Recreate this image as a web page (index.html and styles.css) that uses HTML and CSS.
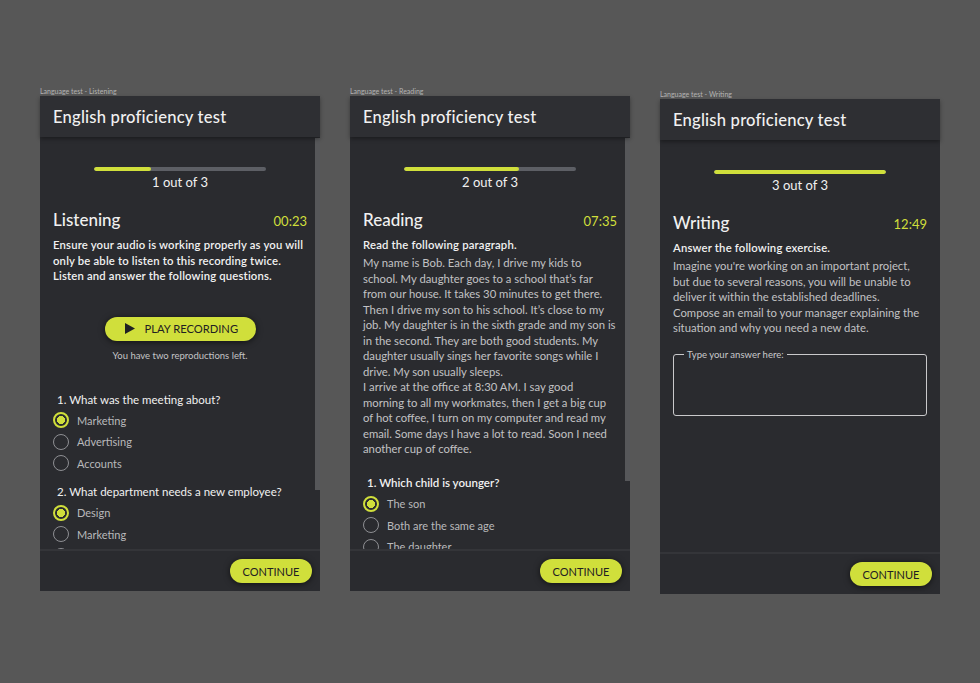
FILE: index.html
```html
<!DOCTYPE html>
<html>
<head>
	<title>Language test</title>
	<meta charset="utf-8">
	<meta name="viewport" content="width=device-width, initial-scale=1">
	<link rel="stylesheet" href="styles.css">
</head>
<body>
	<div class="board">

		<!-- Listening -->
		<div class="artboard">
			<div class="artboard-label">Language test - Listening</div>
			<div class="screen">
				<header class="screen-header"><h1>English proficiency test</h1></header>
				<div class="screen-body">
					<div class="screen-content">
						<div class="progress"><div class="progress-fill" style="width: 33.3%"></div></div>
						<p class="progress-label">1 out of 3</p>
						<div class="section-head">
							<h2>Listening</h2>
							<span class="timer">00:23</span>
						</div>
						<p class="instruction">Ensure your audio is working properly as you will only be able to listen to this recording twice. Listen and answer the following questions.</p>
						<div class="player">
							<button class="play-btn">
								<svg width="10" height="11" viewBox="0 0 10 11"><polygon points="0,0 10,5.5 0,11" fill="#1f2023"/></svg>
								PLAY RECORDING
							</button>
							<p class="player-note">You have two reproductions left.</p>
						</div>
						<div class="question">
							<p class="question-title">1. What was the meeting about?</p>
							<label class="option"><span class="radio checked"></span>Marketing</label>
							<label class="option"><span class="radio"></span>Advertising</label>
							<label class="option"><span class="radio"></span>Accounts</label>
						</div>
						<div class="question">
							<p class="question-title">2. What department needs a new employee?</p>
							<label class="option"><span class="radio checked"></span>Design</label>
							<label class="option"><span class="radio"></span>Marketing</label>
							<label class="option"><span class="radio"></span>Sales</label>
						</div>
					</div>
					<div class="scrollbar"><div class="thumb" style="height: 352px"></div></div>
				</div>
				<footer class="screen-footer"><button class="continue-btn">CONTINUE</button></footer>
			</div>
		</div>

		<!-- Reading -->
		<div class="artboard">
			<div class="artboard-label">Language test - Reading</div>
			<div class="screen">
				<header class="screen-header"><h1>English proficiency test</h1></header>
				<div class="screen-body">
					<div class="screen-content">
						<div class="progress"><div class="progress-fill" style="width: 66.6%"></div></div>
						<p class="progress-label">2 out of 3</p>
						<div class="section-head">
							<h2>Reading</h2>
							<span class="timer">07:35</span>
						</div>
						<p class="instruction">Read the following paragraph.</p>
						<p class="text">My name is Bob. Each day, I drive my kids to school. My daughter goes to a school that’s far from our house. It takes 30 minutes to get there. Then I drive my son to his school. It’s close to my job. My daughter is in the sixth grade and my son is in the second. They are both good students. My daughter usually sings her favorite songs while I drive. My son usually sleeps.<br>I arrive at the office at 8:30 AM. I say good morning to all my workmates, then I get a big cup of hot coffee, I turn on my computer and read my email. Some days I have a lot to read. Soon I need another cup of coffee.</p>
						<div class="question question-reading">
							<p class="question-title">1. Which child is younger?</p>
							<label class="option"><span class="radio checked"></span>The son</label>
							<label class="option"><span class="radio"></span>Both are the same age</label>
							<label class="option"><span class="radio"></span>The daughter</label>
						</div>
					</div>
					<div class="scrollbar"><div class="thumb" style="height: 343px"></div></div>
				</div>
				<footer class="screen-footer"><button class="continue-btn">CONTINUE</button></footer>
			</div>
		</div>

		<!-- Writing -->
		<div class="artboard artboard-low">
			<div class="artboard-label">Language test - Writing</div>
			<div class="screen">
				<header class="screen-header"><h1>English proficiency test</h1></header>
				<div class="screen-body">
					<div class="screen-content">
						<div class="progress"><div class="progress-fill" style="width: 100%"></div></div>
						<p class="progress-label">3 out of 3</p>
						<div class="section-head">
							<h2>Writing</h2>
							<span class="timer">12:49</span>
						</div>
						<p class="instruction">Answer the following exercise.</p>
						<p class="text">Imagine you're working on an important project, but due to several reasons, you will be unable to deliver it within the established deadlines. Compose an email to your manager explaining the situation and why you need a new date.</p>
						<fieldset class="answer">
							<legend>Type your answer here:</legend>
							<textarea></textarea>
						</fieldset>
					</div>
					<div class="scrollbar"></div>
				</div>
				<footer class="screen-footer"><button class="continue-btn">CONTINUE</button></footer>
			</div>
		</div>

	</div>
</body>
</html>
```

FILE: styles.css
```css
body {
	margin: 0;
	background-color: #575757;
	font-family: "Lato", "Liberation Sans", sans-serif;
	color: #f1f1f1;
}

.board {
	display: flex;
	align-items: flex-start;
	gap: 30px;
	padding: 86px 0 0 40px;
}

.artboard {
	width: 280px;
}

.artboard-low {
	margin-top: 3px;
}

.artboard-label {
	height: 10px;
	font-size: 7px;
	line-height: 10px;
	color: #b4b4b4;
}

.screen {
	display: flex;
	flex-direction: column;
	height: 495px;
	background-color: #2a2b2f;
}

.screen-header {
	position: relative;
	z-index: 1;
	display: flex;
	align-items: center;
	height: 41px;
	padding-left: 13px;
	background-color: #2e2f33;
	box-shadow: 0 2px 4px rgba(0,0,0,0.35);
}

.screen-header h1 {
	margin: 0;
	font-size: 16.6px;
	font-weight: 500;
	letter-spacing: 0.2px;
}

.screen-body {
	flex: 1;
	min-height: 0;
	display: flex;
	overflow: hidden;
}

.screen-content {
	flex: 1;
	padding: 30px 8px 0 13px;
}

.scrollbar {
	width: 5px;
	padding-top: 1px;
}

.thumb {
	background-color: #56575a;
}

p {
	margin: 0;
}

.progress {
	width: 172px;
	height: 4px;
	margin: 0 auto;
	border-radius: 2px;
	background-color: #5d5f65;
	overflow: hidden;
}

.progress-fill {
	height: 100%;
	border-radius: 2px;
	background-color: #d0df3b;
}

.progress-label {
	margin-top: 3px;
	text-align: center;
	font-size: 13px;
	line-height: 16px;
}

.section-head {
	display: flex;
	justify-content: space-between;
	align-items: baseline;
	margin-top: 19px;
	line-height: 22px;
}

.section-head h2 {
	margin: 0;
	font-size: 17px;
	font-weight: 500;
}

.timer {
	font-size: 13px;
	color: #d0df3b;
}

.instruction {
	margin-top: 5px;
	font-size: 11.3px;
	font-weight: 600;
	line-height: 15.5px;
	letter-spacing: 0.17px;
}

.text {
	margin-top: 2.5px;
	font-size: 11.3px;
	line-height: 15.5px;
	color: #c2c2c4;
}

.player {
	margin-top: 33px;
	text-align: center;
}

.play-btn {
	display: inline-flex;
	align-items: center;
	gap: 10px;
	width: 151px;
	height: 24px;
	padding: 0 0 0 20px;
	border: none;
	border-radius: 12px;
	background-color: #d0df3b;
	box-shadow: 0 1px 6px rgba(0,0,0,0.6);
	font-family: inherit;
	font-size: 11.2px;
	color: #1f2023;
}

.player-note {
	margin-top: 8.5px;
	font-size: 9.5px;
	line-height: 13px;
	color: #c4c4c6;
}

.question {
	margin-top: 10px;
}

.player + .question {
	margin-top: 29.5px;
}

.question-reading {
	margin-top: 18.5px;
}

.question-title {
	margin-bottom: 2px;
	padding-left: 4px;
	font-size: 11.5px;
	line-height: 16px;
}

.question-reading .question-title {
	font-weight: 600;
}

.option {
	display: flex;
	align-items: center;
	gap: 8px;
	height: 21.5px;
	font-size: 11px;
	color: #b9b9bb;
}

.radio {
	box-sizing: border-box;
	width: 16px;
	height: 16px;
	border: 1.5px solid #8e8f93;
	border-radius: 50%;
}

.radio.checked {
	border: 2px solid #d0df3b;
	background: radial-gradient(circle, #d0df3b 0 3.8px, transparent 4.3px);
}

.answer {
	margin: 13px 0 0;
	padding: 0 10px;
	min-width: 0;
	height: 67px;
	box-sizing: border-box;
	border: 1px solid #c9c9cb;
	border-radius: 3px;
}

.answer legend {
	padding: 0 3px;
	font-size: 9.5px;
	line-height: 12px;
	color: #c9c9cb;
}

.answer textarea {
	width: 100%;
	height: 40px;
	border: none;
	background: transparent;
	resize: none;
	outline: none;
}

.screen-footer {
	display: flex;
	justify-content: flex-end;
	align-items: center;
	height: 40px;
	padding-right: 8px;
	border-top: 2px solid #343539;
	background-color: #2a2b2f;
}

.continue-btn {
	width: 82px;
	height: 24px;
	border: none;
	border-radius: 12px;
	background-color: #d0df3b;
	box-shadow: 0 1px 6px rgba(0,0,0,0.6);
	font-family: inherit;
	font-size: 11px;
	color: #1f2023;
}
```
